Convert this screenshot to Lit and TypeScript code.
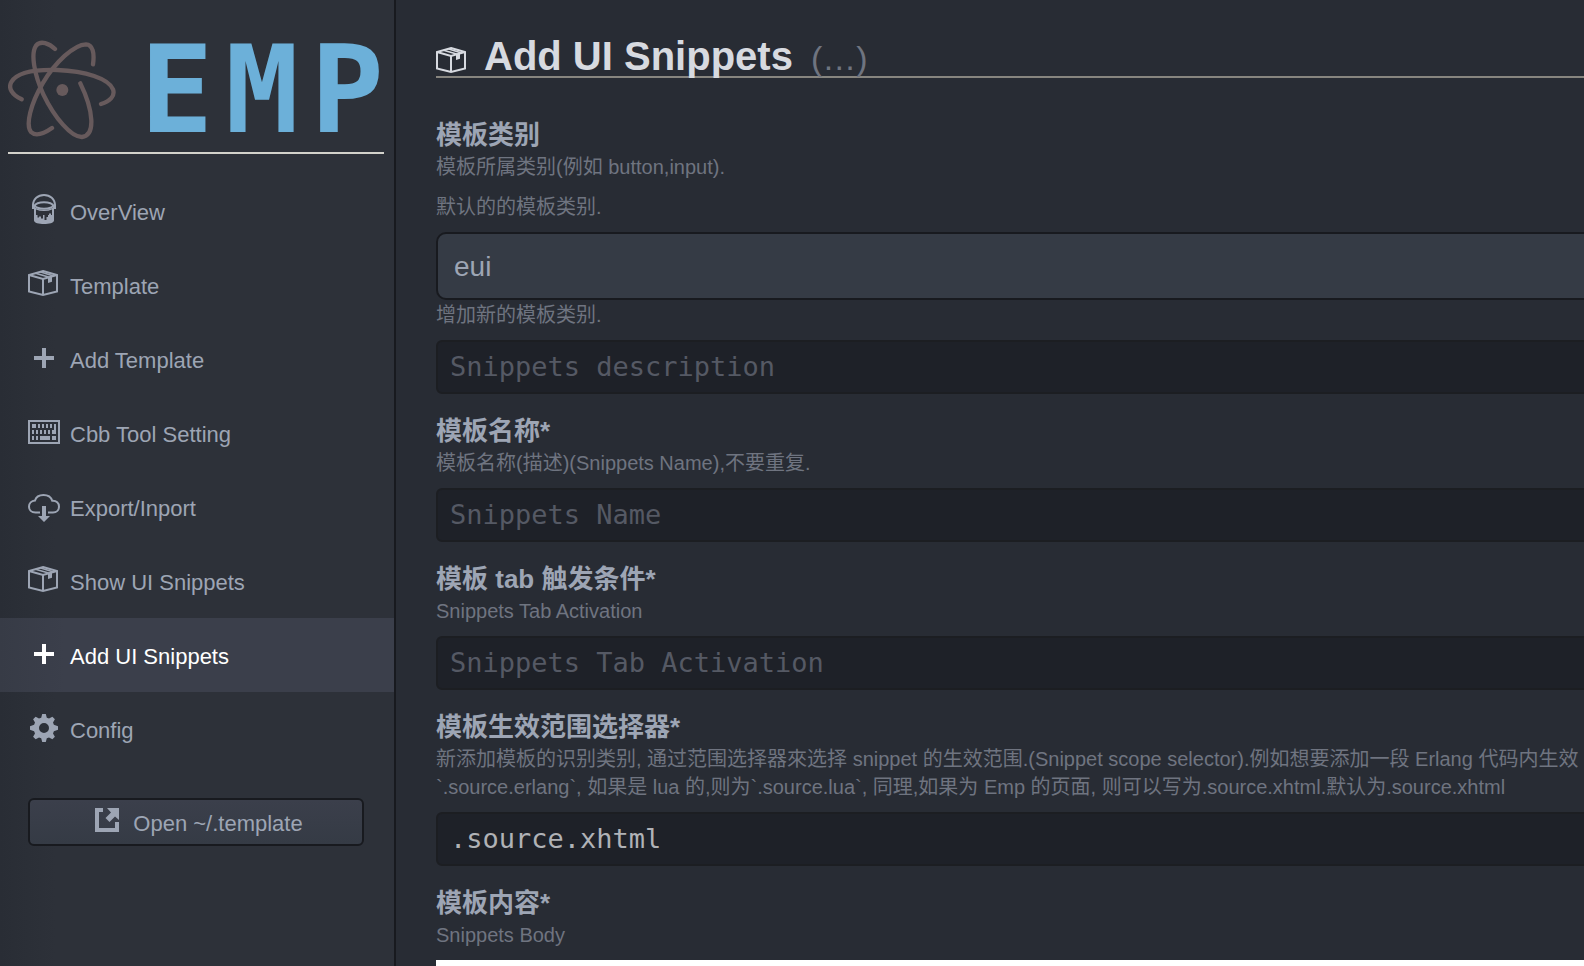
import { LitElement, html, css, svg } from "lit";
import { customElement } from "lit/decorators.js";
import { classMap } from "lit/directives/class-map.js";

const packageIcon = svg`
  <g fill="none" stroke="currentColor" stroke-width="2">
    <path d="M15 2 29 6V22.5L15 26 1 22.5V6Z"/>
    <path d="M1 6 15 10 29 6M15 10V26"/>
    <path d="M7.5 4.2 21.5 8.2M12 2.8 25.5 7" stroke-width="1.6"/>
  </g>
  <path fill="currentColor" d="M20 8.6 24 7.4V12.8L20 14Z"/>`;

const icons: Record<string, unknown> = {
  paintcan: svg`
    <g fill="none" stroke="currentColor">
      <path d="M5 13V10.500C5 4 10 0 16 0S27 4 27 10.500V13" stroke-width="2"/>
      <ellipse cx="16" cy="10.500" rx="9" ry="3.200" stroke-width="2"/>
    </g>
    <path fill="currentColor" d="M4 9.500H7V14H4ZM25 9.500H28V14H25Z"/>
    <path fill="currentColor" d="M6 11.500C8 14 12 14.700 16 14.700S24 14 26 11.500V25.500C26 28 21 29 16 29S6 28 6 25.500Z"/>
    <path fill="#2d3139" d="M8 14.500Q11 16 16 16T24 14.500V20H23V18.500H21V20H20V22H18.500V25H16.500V20H15V23.500H13V21.500H11V22.500H9.500V20H8Z"/>`,
  package: packageIcon,
  plus: svg`<path fill="currentColor" d="M14 5h4v8h8v4h-8v8h-4v-8H6v-4h8z"/>`,
  keyboard: svg`
    <path fill="none" stroke="currentColor" stroke-width="2" d="M1 4H31V26H1Z"/>
    <path fill="currentColor" d="M4 7h4v4H4zM10 7h2v4h-2zM14 7h2v4h-2zM18 7h2v4h-2zM22 7h2v4h-2zM26 7h2v10h-4v-4h2z
      M4 13h2v4H4zM8 13h2v4H8zM12 13h2v4h-2zM16 13h2v4h-2zM20 13h2v4h-2z
      M4 19h2v4H4zM8 19h2v4H8zM12 19h10v4H12zM24 19h4v4h-4z"/>`,
  cloud: svg`
    <path fill="none" stroke="currentColor" stroke-width="2" d="M12 21.500H7.500C3.500 21.500 1 18.800 1 15.500S3.500 9.800 7 9.500C8 6 11.500 4 15.500 4S23 6 24.200 9.800C28.500 9.500 31 12 31 15.500S28.500 21.500 25 21.500H20"/>
    <path fill="currentColor" d="M14 15h4v10h4l-6 6-6-6h4z"/>`,
  gear: svg`
    <path fill="currentColor" fill-rule="evenodd" d="M14.200 1h3.600l1 3.700 2.200.9 3.400-1.900 2.500 2.500L25 9.600l.9 2.200 4.100 1.400v3.600l-4.100 1.400-.9 2.200 1.900 3.400-2.500 2.500L21 24.400l-2.200.9-1 3.700h-3.600l-1-3.700-2.200-.9-3.400 1.900-2.500-2.500L7 20.400l-.9-2.200L2 16.800v-3.600l4.100-1.400L7 9.600 5.100 6.200l2.500-2.500L11 5.600l2.200-.9ZM16 10a5 5 0 1 0 0 10 5 5 0 0 0 0-10Z"/>`,
};

const icon = (name: string) => html`<svg class="icon" viewBox="0 0 32 32" aria-hidden="true">${icons[name]}</svg>`;

const entries = [
  { icon: "paintcan", text: "OverView" },
  { icon: "package", text: "Template" },
  { icon: "plus", text: "Add Template" },
  { icon: "keyboard", text: "Cbb Tool Setting" },
  { icon: "cloud", text: "Export/Inport" },
  { icon: "package", text: "Show UI Snippets" },
  { icon: "plus", text: "Add UI Snippets", selected: true },
  { icon: "gear", text: "Config" },
];

@customElement("emp-sidebar")
export class EmpSidebar extends LitElement {
  static styles = css`
    :host {
      display: flex;
      flex-direction: column;
      box-sizing: border-box;
      border-right: 2px solid #181a1f;
      background: linear-gradient(to right, #292d35, #2d3139 56px);
      color: #9da5b4;
      font-size: 22px;
    }
    .logo {
      display: flex;
      align-items: center;
      margin: 0 10px 20px 8px;
      padding: 40px 0 12px;
      border-bottom: 2px solid #d3d2cb;
    }
    .atom {
      width: 108px;
      height: 100px;
      flex: none;
    }
    .name {
      flex: 1;
      display: flex;
      justify-content: space-between;
      margin-left: 24px;
      font: bold 122px/100px "DejaVu Sans Mono", monospace;
      color: #6cb0d9;
    }
    .entry {
      display: flex;
      align-items: center;
      gap: 10px;
      height: 74px;
      padding-left: 28px;
      color: inherit;
      text-decoration: none;
    }
    .text {
      padding-top: 3px;
    }
    .selected {
      background: linear-gradient(to right, #373b46, #3b3f4b 64px);
      color: #fff;
    }
    .icon {
      width: 32px;
      height: 32px;
      flex: none;
      overflow: visible;
    }
    .open {
      display: flex;
      align-items: center;
      justify-content: center;
      gap: 14px;
      height: 48px;
      margin: 32px 30px 0 28px;
      padding: 0 0 0 6px;
      border: 2px solid #181a1f;
      border-radius: 6px;
      background: linear-gradient(#3b3f4b, #353b45);
      color: inherit;
      font: inherit;
    }
    .external {
      width: 24px;
      height: 28px;
    }
  `;

  render() {
    return html`
      <div class="logo">
        <svg class="atom" viewBox="24 120 324 300" aria-hidden="true">
          <g fill="none" stroke="#675a5c" stroke-width="13" stroke-linecap="round">
            <path d="M65 298C35 284 24 264 34 246C50 218 104 208 172 210C256 213 326 236 339 268C346 288 330 304 303 312"/>
            <path d="M165 147C148 130 122 120 108 137C92 160 102 222 130 283C164 354 214 412 246 411C288 406 280 330 241 250"/>
            <path d="M279 193C284 158 278 134 258 133C222 134 166 186 128 250C92 312 76 374 93 396C107 410 130 402 156 384"/>
          </g>
          <circle cx="187" cy="270" r="18" fill="#675a5c"/>
        </svg>
        <div class="name"><span>E</span><span>M</span><span>P</span></div>
      </div>
      <nav>
        ${entries.map(
          (e) => html`<a href="#" class=${classMap({ entry: true, selected: !!e.selected })}>${icon(e.icon)}<span class="text">${e.text}</span></a>`
        )}
      </nav>
      <button class="open" type="button">
        <svg class="external" viewBox="0 0 24 28" aria-hidden="true">
          <path fill="currentColor" d="M0 0H8V4H4V20H20V14H24V24H0ZM12 0H24V12L20 8.500 14.500 14 10.500 10 16 4.500Z"/>
        </svg>
        <span class="text">Open ~/.template</span>
      </button>
    `;
  }
}

@customElement("app-root")
export class AppRoot extends LitElement {
  static styles = css`
    :host {
      display: grid;
      grid-template-columns: 396px 1fr;
      height: 100vh;
      overflow: hidden;
      background: #282c34;
      font-family: "Liberation Sans", "Noto Sans CJK SC", sans-serif;
    }
    .panel {
      min-width: 0;
      padding-left: 40px;
    }
    .form {
      width: calc(100% + 40px);
    }
    .title {
      display: flex;
      align-items: baseline;
      gap: 18px;
      height: 44px;
      margin: 0 0 40px;
      padding-top: 32px;
      border-bottom: 2px solid #87857f;
      font-size: 40px;
      line-height: 48px;
      color: #d7dae0;
    }
    .icon {
      width: 30px;
      height: 24px;
      overflow: visible;
    }
    .more {
      font-size: 34px;
      font-weight: normal;
      color: #6f7480;
    }
    .field {
      margin-bottom: 20px;
    }
    .label {
      display: block;
      font-size: 26px;
      font-weight: bold;
      line-height: 34px;
      color: #9da5b4;
    }
    .hint {
      display: block;
      margin: 0 0 11px;
      padding-top: 1px;
      font-size: 20px;
      line-height: 28px;
      color: #6f7480;
    }
    .select,
    .input {
      display: block;
      box-sizing: border-box;
      width: 100%;
      appearance: none;
      outline: none;
    }
    .select {
      height: 68px;
      padding: 0 16px;
      border: 2px solid #181a1f;
      border-radius: 10px;
      background: #353b45;
      color: #9da5b4;
      font: 28px "Liberation Sans", sans-serif;
    }
    .input {
      height: 54px;
      padding: 0 12px 2px;
      border: 2px solid #1c1e22;
      border-radius: 6px;
      background: #1e2128;
      color: #b0b2b6;
      font: 27px "DejaVu Sans Mono", monospace;
    }
    .input::placeholder {
      color: #555964;
      opacity: 1;
    }
    .body {
      display: block;
      box-sizing: border-box;
      width: 100%;
      height: 300px;
      border: 0;
      background: #fff;
      resize: none;
    }
  `;

  render() {
    return html`
      <emp-sidebar></emp-sidebar>
      <main class="panel">
        <form class="form">
          <h1 class="title">
            <svg class="icon" viewBox="0 0 30 24" aria-hidden="true">${packageIcon}</svg>
            <span>Add UI Snippets</span>
            <span class="more">(…)</span>
          </h1>
          <div class="field">
            <label class="label" for="kind">模板类别</label>
            <span class="hint">模板所属类别(例如 button,input).</span>
            <label class="hint" for="kind">默认的的模板类别.</label>
            <select class="select" id="kind"><option>eui</option></select>
            <label class="hint" for="new-kind">增加新的模板类别.</label>
            <input class="input" id="new-kind" placeholder="Snippets description" />
          </div>
          <div class="field">
            <label class="label" for="name">模板名称*</label>
            <span class="hint">模板名称(描述)(Snippets Name),不要重复.</span>
            <input class="input" id="name" placeholder="Snippets Name" />
          </div>
          <div class="field">
            <label class="label" for="tab">模板 tab 触发条件*</label>
            <span class="hint">Snippets Tab Activation</span>
            <input class="input" id="tab" placeholder="Snippets Tab Activation" />
          </div>
          <div class="field">
            <label class="label" for="scope">模板生效范围选择器*</label>
            <span class="hint">新添加模板的识别类别, 通过范围选择器來选择 snippet 的生效范围.(Snippet scope selector).例如想要添加一段 Erlang 代码内生效<br />\`.source.erlang\`, 如果是 lua 的,则为\`.source.lua\`, 同理,如果为 Emp 的页面, 则可以写为.source.xhtml.默认为.source.xhtml</span>
            <input class="input" id="scope" .value=${".source.xhtml"} />
          </div>
          <div class="field">
            <label class="label" for="body">模板内容*</label>
            <span class="hint">Snippets Body</span>
            <textarea class="body" id="body"></textarea>
          </div>
        </form>
      </main>
    `;
  }
}
